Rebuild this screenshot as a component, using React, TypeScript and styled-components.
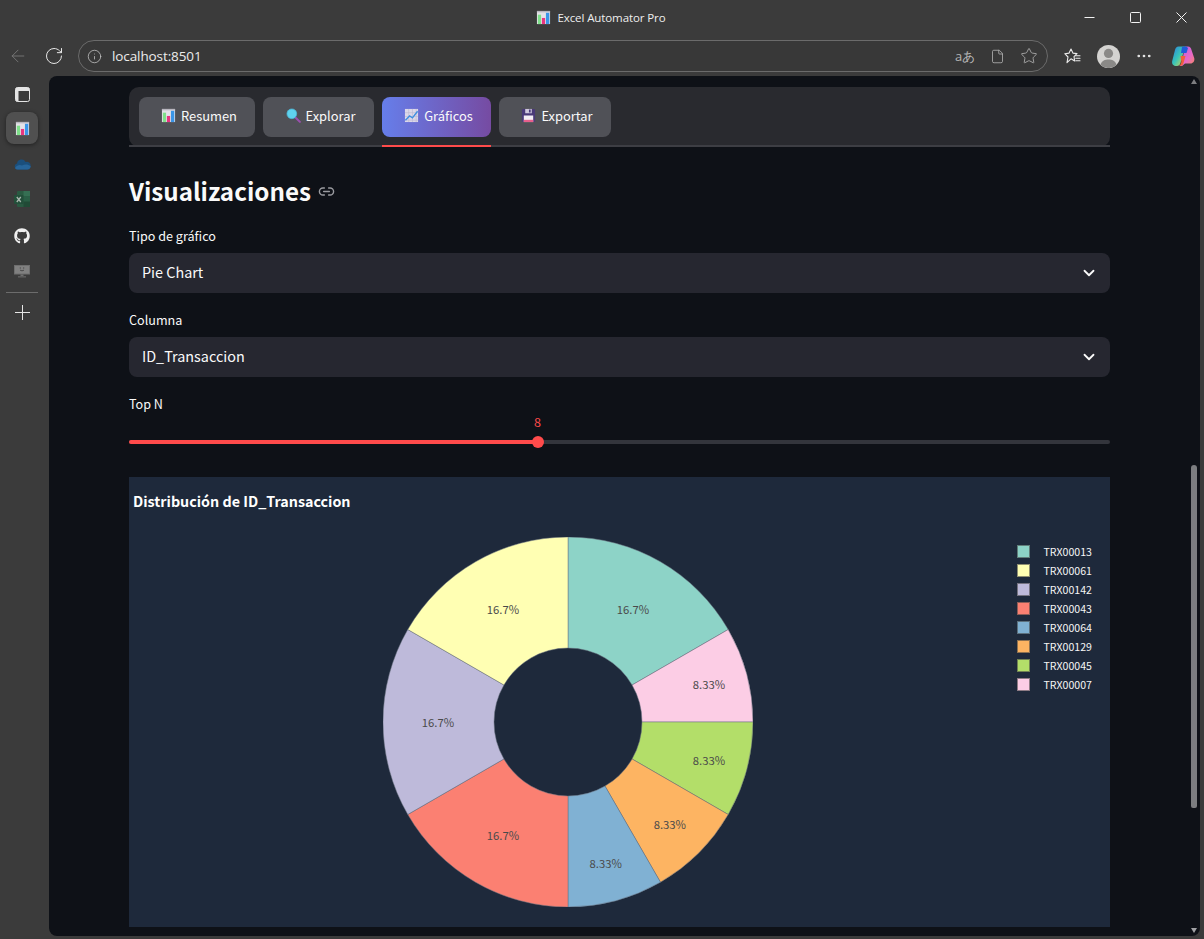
import React from 'react';
import styled, { createGlobalStyle } from 'styled-components';
import { ArrowLeft, ChevronDown, Ellipsis, File, Info, Link2, RotateCw, Star } from 'lucide-react';
import { FaGithub } from 'react-icons/fa';

const SOURCE = `"Noto Sans CJK JP", "Noto Sans", sans-serif`;
const UI = `"Open Sans", "Noto Sans", sans-serif`;

const GlobalStyle = createGlobalStyle`
  html, body { margin: 0; padding: 0; background: #3b3b3b; }
  * { box-sizing: border-box; }
`;

const Win = styled.div`
  width: 1204px;
  height: 939px;
  display: flex;
  flex-direction: column;
  overflow: hidden;
  background: #3b3b3b;
  font-family: ${UI};
`;

const TitleBar = styled.div`
  height: 34px;
  display: grid;
  grid-template-columns: 1fr auto 1fr;
  align-items: center;
`;

const WinTitle = styled.div`
  grid-column: 2;
  display: flex;
  align-items: center;
  gap: 7px;
  color: #eeeeee;
  font-size: 11.5px;
  letter-spacing: -0.1px;
  margin-left: -3px;
`;

const WinControls = styled.div`
  grid-column: 3;
  justify-self: end;
  display: flex;
  color: #f2f2f2;
`;

const WinButton = styled.div`
  width: 46px;
  height: 34px;
  display: flex;
  align-items: center;
  justify-content: center;
`;

const Toolbar = styled.div`
  height: 42px;
  padding: 6px 0 4px 6px;
  display: flex;
  align-items: flex-start;
`;

const NavBtn = styled.div<{ $w: number; $dim?: boolean }>`
  width: ${(p) => p.$w}px;
  height: 32px;
  display: flex;
  align-items: center;
  justify-content: center;
  flex-shrink: 0;
  color: ${(p) => (p.$dim ? '#7d7d7d' : '#e6e6e6')};
`;

const UrlBar = styled.div`
  width: 970px;
  height: 32px;
  margin-right: 6px;
  padding: 0 2px 0 8px;
  flex-shrink: 0;
  display: flex;
  align-items: center;
  border: 1px solid #6b6b6b;
  border-radius: 16px;
  background: #383838;
`;

const UrlText = styled.span`
  flex: 1;
  margin-left: 10px;
  color: #ececec;
  font-size: 13.5px;
  letter-spacing: -0.1px;
`;

const UrlIcon = styled.div`
  width: 32px;
  height: 30px;
  display: flex;
  align-items: center;
  justify-content: center;
  color: #b4b4b4;
  font-family: ${UI};
  font-size: 13px;
`;

const Body = styled.div`
  flex: 1;
  display: flex;
  min-height: 0;
`;

const Sidebar = styled.div`
  width: 49px;
  flex-shrink: 0;
  padding-left: 6px;
  display: flex;
  flex-direction: column;
  align-items: flex-start;
`;

const SideItem = styled.div<{ $h: number; $active?: boolean }>`
  width: 32px;
  height: ${(p) => p.$h}px;
  flex-shrink: 0;
  display: flex;
  align-items: center;
  justify-content: center;
  border-radius: 8px;
  color: #f0f0f0;
  background: ${(p) => (p.$active ? '#505050' : 'transparent')};
  box-shadow: ${(p) => (p.$active ? '0 1px 4px rgba(0,0,0,.45)' : 'none')};
`;

const SideRule = styled.div`
  width: 32px;
  height: 1px;
  margin-top: 8px;
  background: #6c6c6c;
`;

const Page = styled.div`
  width: 1151px;
  height: 860px;
  display: flex;
  overflow: hidden;
  border-radius: 8px;
  background: #0e1117;
`;

const Main = styled.div`
  width: 1061px;
  padding: 11px 0 0 80px;
  flex-shrink: 0;
`;

const ScrollRail = styled.div`
  margin-left: auto;
  margin-right: 2px;
  width: 8px;
  display: flex;
  flex-direction: column;
  align-items: center;
`;

const ScrollThumb = styled.div`
  width: 6px;
  height: 343px;
  margin: 381px 0 120px;
  border-radius: 3px 3px 2px 2px;
  background: #7c7d80;
`;

const ArrowUp = styled.div`
  width: 0;
  height: 0;
  margin-top: 3px;
  border-left: 3.5px solid transparent;
  border-right: 3.5px solid transparent;
  border-bottom: 5px solid #7c7d80;
`;

const ArrowDown = styled(ArrowUp)`
  margin-top: 0;
  border-bottom: 0;
  border-top: 5px solid #a0a1a4;
`;

const TabPanel = styled.div`
  width: 981px;
  height: 60px;
  padding: 10px;
  display: flex;
  gap: 8px;
  border-radius: 10px;
  background: #292a2f;
  position: relative;

  &::before {
    content: '';
    position: absolute;
    left: 0;
    right: 0;
    bottom: 0;
    height: 2px;
    background: #3d3e44;
  }
`;

const Tab = styled.div<{ $w: number; $active?: boolean }>`
  width: ${(p) => p.$w}px;
  height: 40px;
  padding: 0 0 3px 4px;
  display: flex;
  align-items: center;
  justify-content: center;
  gap: 5px;
  border-radius: 8px;
  color: #fafafa;
  font-family: ${SOURCE};
  font-size: 12.9px;
  background: ${(p) => (p.$active ? 'linear-gradient(90deg, #667eea 0%, #764ba2 100%)' : '#505157')};
  position: relative;
`;

const TabMark = styled.div`
  position: absolute;
  left: 0;
  right: 0;
  bottom: -10px;
  height: 2px;
  background: #ff4b4b;
`;

const Heading = styled.h2`
  margin: 25px 0 0;
  height: 38px;
  display: flex;
  align-items: center;
  gap: 7px;
  color: #fafafa;
  font-family: ${SOURCE};
  font-size: 24.2px;
  font-weight: 700;
  line-height: 38px;
`;

const FieldLabel = styled.div<{ $top: number }>`
  margin-top: ${(p) => p.$top}px;
  height: 20px;
  color: #fafafa;
  font-family: ${SOURCE};
  font-size: 12.6px;
  line-height: 20px;
`;

const Select = styled.div`
  width: 981px;
  height: 40px;
  margin-top: 7px;
  padding: 0 12px 0 13px;
  display: flex;
  align-items: center;
  justify-content: space-between;
  border-radius: 8px;
  background: #262730;
  color: #fafafa;
  font-family: ${SOURCE};
  font-size: 14.4px;
`;

const SelectText = styled.span`
  margin-bottom: 4px;
`;

const SliderWrap = styled.div`
  width: 981px;
  height: 29px;
  margin-top: 1px;
  display: flex;
  flex-direction: column;
`;

const SliderValue = styled.div<{ $pct: number }>`
  height: 14px;
  padding-left: ${(p) => p.$pct}%;
  color: #ff4b4b;
  font-family: ${SOURCE};
  font-size: 12.6px;
  line-height: 14px;
  transform: translateX(-4px);
`;

const SliderTrack = styled.div`
  margin-top: 11px;
  height: 4px;
  flex-shrink: 0;
  border-radius: 2px;
  background: #33353c;
  position: relative;
`;

const SliderFill = styled.div`
  height: 4px;
  border-radius: 2px;
  background: #ff4b4b;
`;

const SliderThumb = styled.div`
  position: absolute;
  top: -4px;
  width: 12px;
  height: 12px;
  margin-left: -6px;
  border-radius: 50%;
  background: #ff4b4b;
`;

const ChartPanel = styled.div`
  width: 981px;
  height: 450px;
  margin-top: 33px;
  background: #1e293b;
  display: flex;
  flex-direction: column;
`;

const ChartTitle = styled.div`
  height: 60px;
  padding: 13px 0 0 4px;
  color: #ffffff;
  font-family: ${SOURCE};
  font-size: 14.3px;
  font-weight: 700;
  line-height: 22px;
`;

const ChartRow = styled.div`
  display: flex;
  align-items: flex-start;
  padding-left: 253.5px;
`;

const Legend = styled.div`
  margin-left: auto;
  margin-right: 18px;
  margin-top: 5px;
  display: flex;
  flex-direction: column;
`;

const LegendRow = styled.div`
  height: 19px;
  display: flex;
  align-items: center;
  gap: 14px;
  color: #f5f5f5;
  font-family: ${SOURCE};
  font-size: 10.6px;
`;

const Swatch = styled.span<{ $c: string }>`
  width: 13px;
  height: 13px;
  background: ${(p) => p.$c};
  border: 1px solid rgba(68, 68, 68, 0.6);
`;

const BarsEmoji = ({ s = 15 }: { s?: number }) => (
  <svg width={s} height={s} viewBox="0 0 16 16">
    <rect x="1" y="1" width="14" height="14" fill="#e4e2e8" />
    <rect x="1" y="1" width="14" height="1.5" fill="#b9b7c0" />
    <rect x="2" y="5" width="3.4" height="10" fill="#7fe08a" />
    <rect x="6.3" y="8.5" width="3.4" height="6.5" fill="#e8357f" />
    <rect x="10.6" y="3" width="3.6" height="12" fill="#3a96e8" />
  </svg>
);

const LensEmoji = () => (
  <svg width="15" height="15" viewBox="0 0 16 16">
    <path d="M9 9 L14.8 14.8" stroke="#9a4fae" strokeWidth="2.2" strokeLinecap="round" />
    <circle cx="6.2" cy="6.2" r="5.2" fill="#5fd2ee" />
    <circle cx="6.2" cy="6.2" r="5.2" fill="none" stroke="#4cb6d6" strokeWidth="0.8" />
  </svg>
);

const TrendEmoji = () => (
  <svg width="15" height="15" viewBox="0 0 16 16">
    <rect x="1" y="1" width="14" height="14" fill="#dcd8ea" />
    <path d="M1 5h14M1 9h14M1 13h14M5 1v14M9 1v14M13 1v14" stroke="#b9b4cf" strokeWidth="0.6" />
    <path d="M1.5 13 L6 8.5 L9 10.5 L14.5 3.5" fill="none" stroke="#3f8fe0" strokeWidth="1.5" />
  </svg>
);

const DiskEmoji = () => (
  <svg width="15" height="15" viewBox="0 0 16 16">
    <rect x="1" y="1" width="14" height="14" rx="1" fill="#4a3a78" />
    <rect x="4.5" y="1" width="7" height="4.6" fill="#cfc8dc" />
    <rect x="8.5" y="1.6" width="1.8" height="3.2" fill="#4a3a78" />
    <rect x="3" y="8" width="10" height="7" fill="#f4eef4" />
    <rect x="3" y="12.6" width="10" height="2.4" fill="#e8608c" />
  </svg>
);

const CloudIcon = () => (
  <svg width="17" height="12" viewBox="0 0 17 12">
    <path d="M3.6 11.5 A3.1 3.1 0 0 1 3 5.4 A4.6 4.6 0 0 1 11.6 4 A3.6 3.6 0 0 1 16.6 7.6 A3.7 3.7 0 0 1 13.4 11.5 Z" fill="#1b4f7c" />
    <path d="M1 10 C3.5 6.6 6 6.6 8 7.6 C10.6 5.8 14 6 16.7 8.2 A3.7 3.7 0 0 1 13.4 11.5 H3.6 A3 3 0 0 1 1 10 Z" fill="#27659a" />
  </svg>
);

const ExcelIcon = () => (
  <svg width="16" height="16" viewBox="0 0 16 16">
    <rect x="3" y="0" width="13" height="16" rx="1" fill="#2a5a42" />
    <rect x="9.5" y="0" width="6.5" height="5.3" fill="#356f53" />
    <rect x="9.5" y="5.3" width="6.5" height="5.3" fill="#2a5f46" />
    <rect x="9.5" y="10.6" width="6.5" height="5.4" fill="#214a36" />
    <rect x="0" y="4" width="9.5" height="9" rx="1" fill="#234f3a" />
    <path d="M2.8 6 L6.8 11 M6.8 6 L2.8 11" stroke="#a9b5ae" strokeWidth="1.3" />
  </svg>
);

const MonitorIcon = () => (
  <svg width="16" height="13" viewBox="0 0 16 13">
    <rect x="0" y="0" width="16" height="9.5" fill="#6e6e6e" />
    <rect x="1" y="1" width="14" height="7.5" fill="#808080" />
    <rect x="6.5" y="9.5" width="3" height="1.6" fill="#6e6e6e" />
    <rect x="4" y="11" width="8" height="1.6" fill="#5c5c5c" />
    <path d="M6.3 2.4v1.2M9.7 2.4v1.2M6 5c1 1 3 1 4 0" stroke="#3a3a3a" strokeWidth="0.8" fill="none" />
  </svg>
);

const PanelIcon = () => (
  <svg width="15" height="15" viewBox="0 0 15 15" fill="none">
    <rect x="0.5" y="0.5" width="14" height="14" rx="2" stroke="#e4e4e4" strokeWidth="1" />
    <path d="M0.5 2.5a2 2 0 0 1 2-2h10a2 2 0 0 1 2 2v1.5h-14z M0.5 4h3v10.5h-1a2 2 0 0 1-2-2z" fill="#e4e4e4" />
  </svg>
);

const PlusIcon = () => (
  <svg width="15" height="15" viewBox="0 0 15 15">
    <path d="M7.5 0v15M0 7.5h15" stroke="#e6e6e6" strokeWidth="1" />
  </svg>
);

const FavIcon = () => (
  <svg width="18" height="18" viewBox="0 0 18 18" fill="none" stroke="#ececec" strokeWidth="1.1" strokeLinejoin="round">
    <path d="M8 2 L9.9 6.1 L14 6.6 L11 9.6 L11.7 14 L8 11.8 L4 15.6 L5 10 L1.8 6.7 L6.1 6.1 Z" />
    <path d="M12.5 8.8h4.5M12.8 11.3h4.2M12.8 13.8h4.2" strokeLinecap="round" />
  </svg>
);

const Avatar = () => (
  <svg width="23" height="23" viewBox="0 0 23 23">
    <circle cx="11.5" cy="11.5" r="11.5" fill="#d4d3d1" />
    <circle cx="11.5" cy="8.4" r="4.6" fill="#8a8987" />
    <path d="M3.5 19.8 C5 15.6 8 14.6 11.5 14.6 C15 14.6 18 15.6 19.5 19.8 A11.5 11.5 0 0 1 3.5 19.8 Z" fill="#8a8987" />
  </svg>
);

const Copilot = () => (
  <svg width="24" height="24" viewBox="0 0 24 24">
    <defs>
      <linearGradient id="cpA" x1="0" y1="0" x2="1" y2="1">
        <stop offset="0" stopColor="#2c7fe0" />
        <stop offset="0.5" stopColor="#38c6b8" />
        <stop offset="1" stopColor="#f5d33c" />
      </linearGradient>
      <linearGradient id="cpB" x1="0" y1="0" x2="1" y2="1">
        <stop offset="0" stopColor="#b05ee8" />
        <stop offset="0.6" stopColor="#e868c8" />
        <stop offset="1" stopColor="#f88a5c" />
      </linearGradient>
    </defs>
    <path d="M7.5 2.5 H14 L9.5 19 C9 21 7.5 22 6 22 H5 C2 22 0.6 19.5 1.2 17 L4 6 C4.6 3.8 5.6 2.5 7.5 2.5 Z" fill="url(#cpA)" />
    <path d="M14 2.5 H17 C19 2.5 20 4 20.5 6 L23.2 14 C24 17 22 19.5 19.5 19.5 H14 L11 22 H8 C10 21.5 10.5 20 11 18 Z" fill="url(#cpB)" />
    <path d="M9.5 12 L14.5 12 L12.5 19 C12 20.8 11 22 8.5 22 C9.6 20.8 10 19.5 10.4 18 Z" fill="#f0603c" />
    <path d="M11 3 C13.5 2 16 2.5 17 4 L15.5 9 L10 9 Z" fill="#1f5cd8" />
  </svg>
);

interface Slice {
  name: string;
  color: string;
  from: number;
  to: number;
  label: string;
  labelR: number;
}

const SLICES: Slice[] = [
  { name: 'TRX00013', color: '#8dd3c7', from: 0, to: 60, label: '16.7%', labelR: 130 },
  { name: 'TRX00007', color: '#fccde5', from: 60, to: 90, label: '8.33%', labelR: 146 },
  { name: 'TRX00045', color: '#b3de69', from: 90, to: 120, label: '8.33%', labelR: 146 },
  { name: 'TRX00129', color: '#fdb462', from: 120, to: 150, label: '8.33%', labelR: 144 },
  { name: 'TRX00064', color: '#80b1d3', from: 150, to: 180, label: '8.33%', labelR: 146 },
  { name: 'TRX00043', color: '#fb8072', from: 180, to: 240, label: '16.7%', labelR: 130 },
  { name: 'TRX00142', color: '#bebada', from: 240, to: 300, label: '16.7%', labelR: 130 },
  { name: 'TRX00061', color: '#ffffb3', from: 300, to: 360, label: '16.7%', labelR: 130 },
];

const LEGEND = ['TRX00013', 'TRX00061', 'TRX00142', 'TRX00043', 'TRX00064', 'TRX00129', 'TRX00045', 'TRX00007'];

const polar = (r: number, deg: number) => {
  const a = (deg * Math.PI) / 180;
  return [185 + r * Math.sin(a), 185 - r * Math.cos(a)];
};

const slicePath = (s: Slice) => {
  const R = 185;
  const r = 74;
  const [x1, y1] = polar(R, s.from);
  const [x2, y2] = polar(R, s.to);
  const [x3, y3] = polar(r, s.to);
  const [x4, y4] = polar(r, s.from);
  return `M${x1} ${y1} A${R} ${R} 0 0 1 ${x2} ${y2} L${x3} ${y3} A${r} ${r} 0 0 0 ${x4} ${y4} Z`;
};

const Pie = () => (
  <svg width="370" height="370" viewBox="0 0 370 370">
    {SLICES.map((s) => (
      <path key={s.name} d={slicePath(s)} fill={s.color} stroke="#6b7280" strokeWidth="0.5" />
    ))}
    {SLICES.map((s) => {
      const [x, y] = polar(s.labelR, (s.from + s.to) / 2);
      return (
        <text key={s.name} x={x} y={y + 5} textAnchor="middle" fontSize="11.3" fontFamily={SOURCE} fill="#4a4a4a">
          {s.label}
        </text>
      );
    })}
  </svg>
);

const TABS = [
  { label: 'Resumen', w: 116, icon: <BarsEmoji /> },
  { label: 'Explorar', w: 111, icon: <LensEmoji /> },
  { label: 'Gráficos', w: 109, icon: <TrendEmoji />, active: true },
  { label: 'Exportar', w: 112, icon: <DiskEmoji /> },
];

const App: React.FC = () => {
  const topN = 41.7;
  return (
    <Win>
      <GlobalStyle />
      <TitleBar>
        <WinTitle>
          <BarsEmoji />
          Excel Automator Pro
        </WinTitle>
        <WinControls>
          <WinButton>
            <svg width="11" height="11" viewBox="0 0 11 11"><path d="M0.5 5.5h10" stroke="currentColor" /></svg>
          </WinButton>
          <WinButton>
            <svg width="11" height="11" viewBox="0 0 11 11"><rect x="0.5" y="0.5" width="10" height="10" rx="1" fill="none" stroke="currentColor" /></svg>
          </WinButton>
          <WinButton>
            <svg width="11" height="11" viewBox="0 0 11 11"><path d="M0.5 0.5l10 10M10.5 0.5l-10 10" stroke="currentColor" /></svg>
          </WinButton>
        </WinControls>
      </TitleBar>

      <Toolbar>
        <NavBtn $w={24} $dim><ArrowLeft size={20} strokeWidth={1} /></NavBtn>
        <NavBtn $w={48}><RotateCw size={20} strokeWidth={1.2} /></NavBtn>
        <UrlBar>
          <Info size={15} strokeWidth={1.2} color="#c8c8c8" />
          <UrlText>localhost:8501</UrlText>
          <UrlIcon>aあ</UrlIcon>
          <UrlIcon><File size={15} strokeWidth={1.3} /></UrlIcon>
          <UrlIcon><Star size={18} strokeWidth={1.1} /></UrlIcon>
        </UrlBar>
        <NavBtn $w={36}><FavIcon /></NavBtn>
        <NavBtn $w={36}><Avatar /></NavBtn>
        <NavBtn $w={36}><Ellipsis size={18} strokeWidth={1.6} /></NavBtn>
        <NavBtn $w={42}><Copilot /></NavBtn>
      </Toolbar>

      <Body>
        <Sidebar>
          <SideItem $h={36}><PanelIcon /></SideItem>
          <SideItem $h={32} $active><BarsEmoji /></SideItem>
          <SideItem $h={40}><CloudIcon /></SideItem>
          <SideItem $h={30}><ExcelIcon /></SideItem>
          <SideItem $h={44}><FaGithub size={16} /></SideItem>
          <SideItem $h={26}><MonitorIcon /></SideItem>
          <SideRule />
          <SideItem $h={38}><PlusIcon /></SideItem>
        </Sidebar>

        <Page>
          <Main>
            <TabPanel>
              {TABS.map((t) => (
                <Tab key={t.label} $w={t.w} $active={t.active}>
                  {t.icon}
                  <span>{t.label}</span>
                  {t.active && <TabMark />}
                </Tab>
              ))}
            </TabPanel>

            <Heading>
              Visualizaciones
              <Link2 size={17} color="#9a9ba0" strokeWidth={2} />
            </Heading>

            <FieldLabel $top={16}>Tipo de gráfico</FieldLabel>
            <Select>
              <SelectText>Pie Chart</SelectText>
              <ChevronDown size={18} strokeWidth={2.4} />
            </Select>

            <FieldLabel $top={17}>Columna</FieldLabel>
            <Select>
              <SelectText>ID_Transaccion</SelectText>
              <ChevronDown size={18} strokeWidth={2.4} />
            </Select>

            <FieldLabel $top={17}>Top N</FieldLabel>
            <SliderWrap>
              <SliderValue $pct={topN}>8</SliderValue>
              <SliderTrack>
                <SliderFill style={{ width: `${topN}%` }} />
                <SliderThumb style={{ left: `${topN}%` }} />
              </SliderTrack>
            </SliderWrap>

            <ChartPanel>
              <ChartTitle>Distribución de ID_Transaccion</ChartTitle>
              <ChartRow>
                <Pie />
                <Legend>
                  {LEGEND.map((name) => (
                    <LegendRow key={name}>
                      <Swatch $c={SLICES.find((s) => s.name === name)!.color} />
                      {name}
                    </LegendRow>
                  ))}
                </Legend>
              </ChartRow>
            </ChartPanel>
          </Main>
          <ScrollRail>
            <ArrowUp />
            <ScrollThumb />
            <ArrowDown />
          </ScrollRail>
        </Page>
      </Body>
    </Win>
  );
};

export default App;
